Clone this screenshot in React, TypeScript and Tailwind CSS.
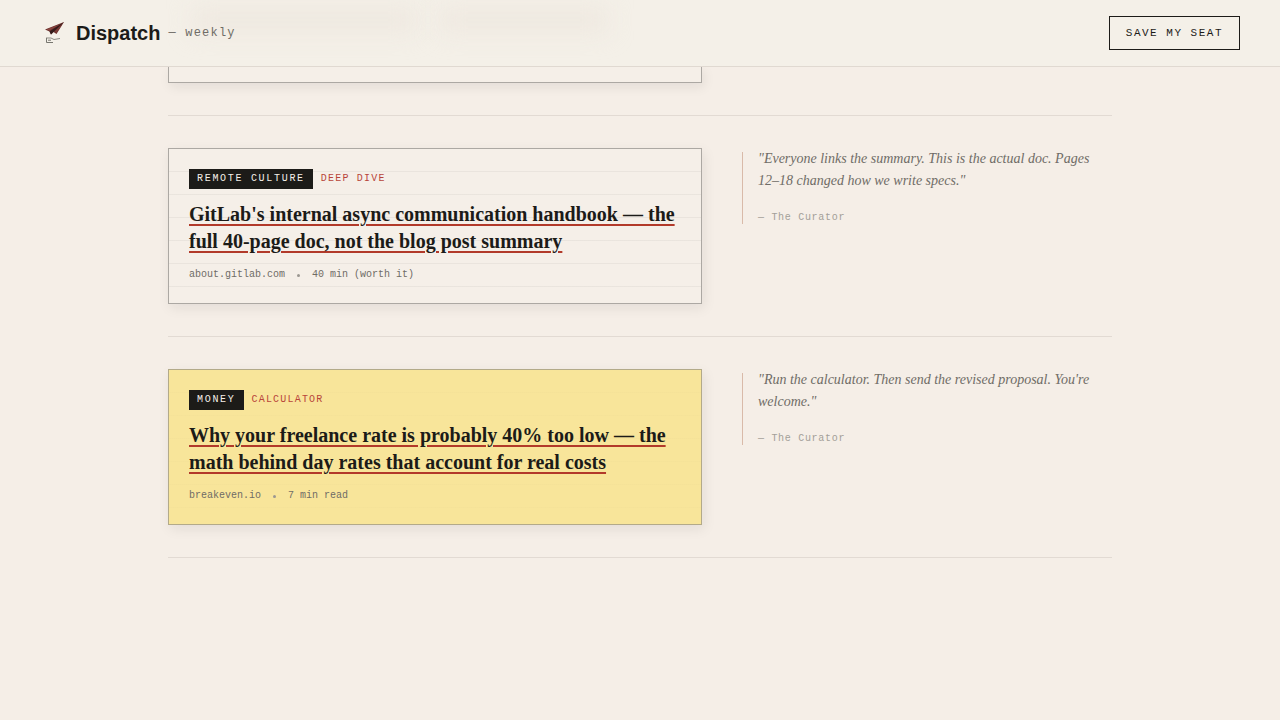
interface Pick {
  category: string;
  kind: string;
  title: string;
  source: string;
  length: string;
  note: string;
  highlight?: boolean;
}

const picks: Pick[] = [
  {
    category: 'REMOTE CULTURE',
    kind: 'DEEP DIVE',
    title: "GitLab's internal async communication handbook — the full 40-page doc, not the blog post summary",
    source: 'about.gitlab.com',
    length: '40 min (worth it)',
    note: '"Everyone links the summary. This is the actual doc. Pages 12–18 changed how we write specs."',
  },
  {
    category: 'MONEY',
    kind: 'CALCULATOR',
    title: 'Why your freelance rate is probably 40% too low — the math behind day rates that account for real costs',
    source: 'breakeven.io',
    length: '7 min read',
    note: '"Run the calculator. Then send the revised proposal. You\'re welcome."',
    highlight: true,
  },
];

const mono = "font-['Liberation_Mono',monospace]";
const serif = "font-['Liberation_Serif',serif]";

function PlaneLogo() {
  return (
    <svg viewBox="0 0 28 28" className="h-7 w-7" aria-hidden="true">
      <path d="M5 10.5 24 3 16.5 15 13.5 13 11 15.5 9.5 12.5Z" fill="#6b302c" />
      <path d="M9.5 12.5 24 3 13.5 13 11 15.5Z" fill="#351c1b" />
      <path d="M6.5 10.6 20.5 5.1 9.5 11.4Z" fill="#8a4640" />
      <path d="M14.5 12.6 22 5.5 16.5 13.8Z" fill="#7b3b36" />
      <path d="M6 19H11L14 20.5 20 19.5" fill="none" stroke="#8d8b83" strokeWidth="1" />
      <path d="M6.5 19V23.5H13M8 21.2H11" fill="none" stroke="#77766f" strokeWidth="1" />
    </svg>
  );
}

function Header() {
  return (
    <header className="relative z-10 flex items-center justify-between border-b border-[#e0d9d1] bg-[#f4f0e8] px-10 py-4">
      <div className="absolute left-48 top-2 h-6 w-56 bg-[#ebe2db]/60 blur-md" />
      <div className="absolute left-110 top-2 h-6 w-42 bg-[#ebe2db]/60 blur-md" />
      <a href="#" className="relative flex items-center gap-2">
        <PlaneLogo />
        <span className="font-['Liberation_Sans',sans-serif] text-xl font-bold text-[#1c1b18]">Dispatch</span>
        <span className={`${mono} text-xs tracking-widest text-[#6f6c66]`}>— weekly</span>
      </a>
      <button
        type="button"
        className={`${mono} relative border border-[#1c1b18] px-4 py-2 text-[11px] leading-4 tracking-[1.5px] text-[#1c1b18]`}
      >
        SAVE MY SEAT
      </button>
    </header>
  );
}

function PickCard({ pick }: { pick: Pick }) {
  return (
    <article
      className={`border p-5 shadow-[2px_4px_12px_rgba(28,27,24,0.08)] ${
        pick.highlight
          ? 'border-[#b3aa89] bg-[#f8e59a] bg-[repeating-linear-gradient(transparent_0_22px,rgba(90,80,60,0.015)_22px_23px)]'
          : 'border-[#aca8a3] bg-[#f5efe8] bg-[repeating-linear-gradient(transparent_0_22px,rgba(28,27,24,0.05)_22px_23px)]'
      }`}
    >
      <div className={`${mono} flex items-center gap-2 text-[10px] leading-5`}>
        <span className="bg-[#1c1b18] px-2 tracking-[0.17em] text-[#f5efe8]">{pick.category}</span>
        <span className="tracking-[0.12em] text-[#b8453a]">{pick.kind}</span>
      </div>
      <h3 className={`${serif} mt-3 text-xl leading-[27px] font-bold text-[#1c1b18]`}>
        <a href="#" className="underline decoration-[#b23a2a] decoration-2 underline-offset-3">
          {pick.title}
        </a>
      </h3>
      <div className={`${mono} mt-3 flex items-center gap-3 text-[10px] leading-4 text-[#6f6c66]`}>
        <span>{pick.source}</span>
        <span className="h-[3px] w-[3px] rounded-full bg-[#9b9791]" />
        <span>{pick.length}</span>
      </div>
    </article>
  );
}

function CuratorNote({ note }: { note: string }) {
  return (
    <figure className="relative self-start pl-4">
      <span className="absolute inset-y-1 left-0 w-px bg-[#d9baa9]" />
      <blockquote className={`${serif} text-sm leading-[22px] text-[#6f6c66] italic`}>{note}</blockquote>
      <figcaption className={`${mono} mt-4 text-[10px] leading-5 tracking-[0.7px] text-[#a39f99]`}>
        — The Curator
      </figcaption>
    </figure>
  );
}

export default function App() {
  return (
    <div className="min-h-screen bg-[#f5eee7]">
      <Header />
      <main className="mx-auto max-w-5xl px-10">
        <div className="grid grid-cols-[1fr_370px] gap-10 border-b border-[#e2dad3] pb-8">
          <div className="h-4 border border-t-0 border-[#aca8a3] bg-[#f5efe8] shadow-[2px_4px_12px_rgba(28,27,24,0.08)]" />
        </div>
        {picks.map((pick) => (
          <section key={pick.category} className="grid grid-cols-[1fr_370px] gap-10 border-b border-[#e2dad3] py-8">
            <PickCard pick={pick} />
            <CuratorNote note={pick.note} />
          </section>
        ))}
      </main>
    </div>
  );
}
